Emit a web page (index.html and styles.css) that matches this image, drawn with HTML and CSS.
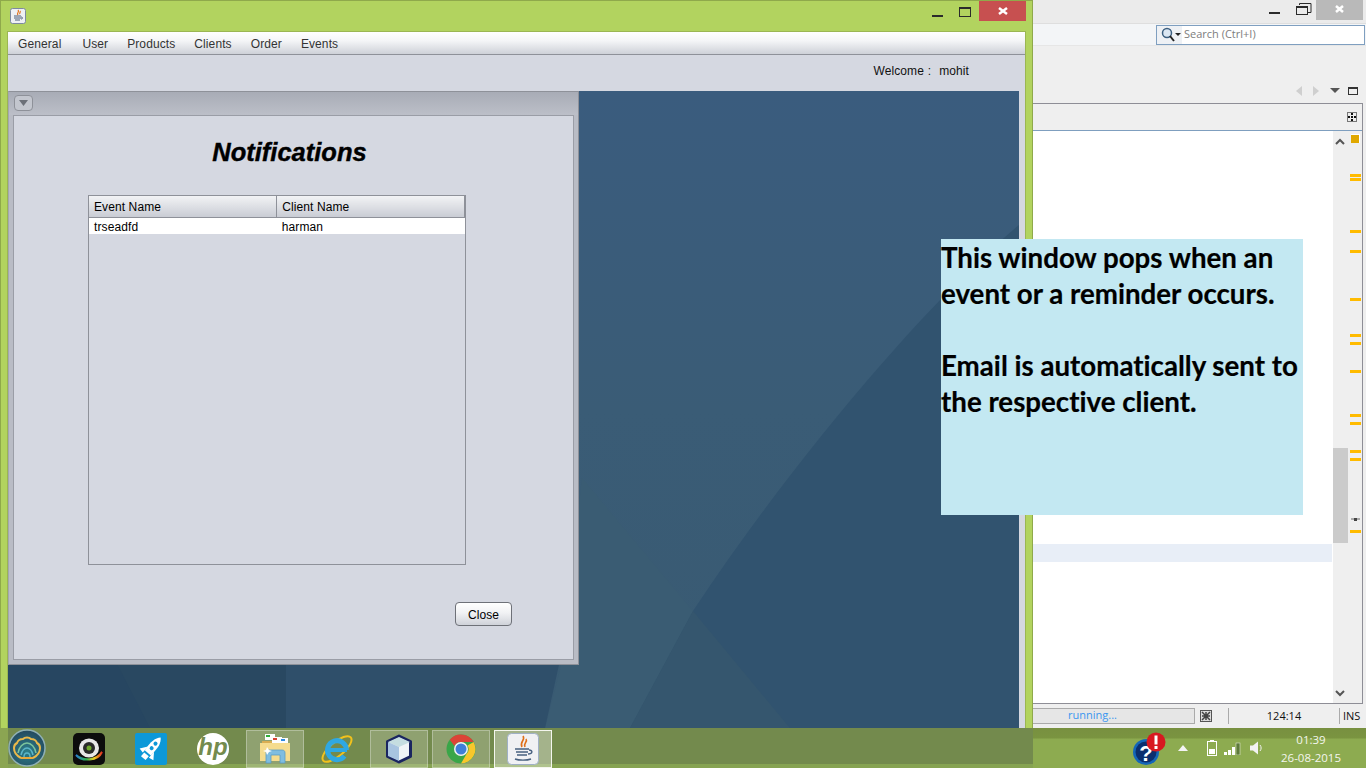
FILE: index.html
```html
<!DOCTYPE html>
<html lang="en">
<head>
    <meta charset="UTF-8">
    <title>Notifications</title>
    <link rel="stylesheet" href="styles.css">
</head>
<body>

<!-- ide window behind the app -->
<div class="ide-window">
    <div class="ide-title">
        <svg class="ide-controls" width="100" height="22" viewBox="0 0 100 22">
            <rect x="6" y="12" width="11" height="2" fill="#2b2b2b"/>
            <path d="M36.500 5V3.500h11.500v9h-3" fill="none" stroke="#2b2b2b"/>
            <rect x="33.500" y="6.500" width="11" height="8" fill="none" stroke="#2b2b2b"/>
            <rect x="33" y="6" width="12" height="2" fill="#2b2b2b"/>
            <rect x="53" y="0" width="47" height="20" fill="#b9b9b9"/>
            <path d="M73 6l7 6M80 6l-7 6" stroke="#fff" stroke-width="2.500"/>
        </svg>
    </div>
    <div class="ide-toolbar">
        <div class="search-box">
            <div class="search-icon">
                <svg width="22" height="18" viewBox="0 0 22 18">
                    <circle cx="7" cy="7" r="4.500" fill="#dbe7f3" stroke="#3c5f80" stroke-width="1.500"/>
                    <path d="M10 10l4 5" stroke="#222" stroke-width="2"/>
                    <path d="M15 7h6l-3 3z" fill="#222"/>
                </svg>
            </div>
            <span class="search-text">Search (Ctrl+I)</span>
        </div>
    </div>
    <div class="ide-nav">
        <svg width="66" height="12" viewBox="0 0 66 12">
            <path d="M7 1v10L1 6z" fill="#cfcfcf"/>
            <path d="M18 1v10l6-5z" fill="#cfcfcf"/>
            <path d="M35 3h10l-5 5z" fill="#555"/>
            <rect x="53.500" y="2.500" width="9" height="7" fill="none" stroke="#333"/>
            <rect x="53" y="2" width="10" height="2" fill="#333"/>
        </svg>
    </div>
    <div class="ide-pane">
        <div class="ide-tabs">
            <svg width="10" height="10" viewBox="0 0 10 10">
                <rect x=".5" y=".5" width="9" height="9" fill="#eee" stroke="#777"/>
                <path d="M5 1v8M1 5h8" stroke="#111" stroke-width="2" stroke-dasharray="2 1"/>
            </svg>
        </div>
        <div class="ide-body">
            <div class="editor">
                <div class="line-highlight"></div>
            </div>
            <svg class="scroll-strip" width="29" height="572" viewBox="0 0 29 572">
                <path d="M3 13l4-4 4 4" fill="none" stroke="#555" stroke-width="2"/>
                <rect x="18" y="3" width="9" height="9" fill="#fff"/>
                <rect x="18" y="4" width="8" height="8" fill="#e0a800"/>
                <rect x="0" y="317" width="15" height="95" fill="#cbcbcb"/>
                <g fill="#ffbb00">
                    <rect x="17" y="43" width="11" height="3"/>
                    <rect x="17" y="47" width="11" height="3"/>
                    <rect x="17" y="99" width="11" height="3"/>
                    <rect x="17" y="119" width="11" height="3"/>
                    <rect x="17" y="167" width="11" height="3"/>
                    <rect x="17" y="203" width="11" height="3"/>
                    <rect x="17" y="211" width="11" height="3"/>
                    <rect x="17" y="239" width="11" height="3"/>
                    <rect x="17" y="283" width="11" height="3"/>
                    <rect x="17" y="291" width="11" height="3"/>
                    <rect x="17" y="319" width="11" height="3"/>
                    <rect x="17" y="327" width="11" height="3"/>
                    <rect x="17" y="399" width="11" height="3"/>
                </g>
                <path d="M18 388h9" stroke="#666"/>
                <rect x="21" y="387" width="3" height="3" fill="#444"/>
                <path d="M3 560l4 4 4-4" fill="none" stroke="#555" stroke-width="2"/>
            </svg>
        </div>
    </div>
    <div class="ide-status">
        <div class="run-box">running...</div>
        <svg class="run-icon" width="12" height="12" viewBox="0 0 12 12">
            <rect x=".5" y=".5" width="11" height="11" fill="#ddd" stroke="#555"/>
            <path d="M2 2l8 8M10 2l-8 8M6 2v8M2 6h8" stroke="#444" stroke-width="1.500"/>
        </svg>
        <span class="status-cell status-pos">124:14</span>
        <span class="status-cell status-ins">INS</span>
    </div>
</div>

<!-- main java app -->
<div class="app-window">
    <div class="app-title">
        <svg class="app-icon" width="16" height="16" viewBox="0 0 16 16">
            <rect x=".5" y=".5" width="15" height="15" rx="2" fill="#eef0f4" stroke="#7d8aa0"/>
            <path d="M8 2c2 2-2 3 0 5M10 3c1 1-1 2 0 3" fill="none" stroke="#e0701a" stroke-width="1.200"/>
            <path d="M4 8h7M4 10h7M5 12h5" stroke="#4a5d78"/>
            <path d="M11 9c2 0 2 2 0 2" fill="none" stroke="#4a5d78"/>
        </svg>
        <div class="app-controls">
            <span class="ctl-min"></span>
            <span class="ctl-max"></span>
            <span class="ctl-close">
                <svg width="10" height="8" viewBox="0 0 10 8">
                    <path d="M1 1l8 6M9 1L1 7" stroke="#fff" stroke-width="2.500"/>
                </svg>
            </span>
        </div>
    </div>
    <div class="app-client">
        <div class="menu-bar">
            <span class="menu-item menu-first">General</span>
            <span class="menu-item">User</span>
            <span class="menu-item">Products</span>
            <span class="menu-item">Clients</span>
            <span class="menu-item">Order</span>
            <span class="menu-item">Events</span>
        </div>
        <div class="welcome-row">Welcome :&nbsp; mohit</div>
        <div class="desktop-pane">
            <svg class="desktop-bg" width="1011" height="637" viewBox="8 91 1011 637">
                <defs>
                    <linearGradient id="deskTop" x1="0" y1="0" x2="0" y2="1">
                        <stop offset="0" stop-color="#3a5c7e"/>
                        <stop offset=".5" stop-color="#3a5c76"/>
                        <stop offset="1" stop-color="#395a72"/>
                    </linearGradient>
                </defs>
                <rect x="8" y="91" width="1011" height="637" fill="url(#deskTop)"/>
                <path d="M1019 225C930 300 800 450 693 611L630 728H1019Z" fill="#31536f"/>
                <path d="M582 478L693 611 630 728H545L560 670Z" fill="#3a5c73"/>
                <path d="M693 611L790 728H630Z" fill="#35566e"/>
                <rect x="8" y="660" width="278" height="68" fill="#274661"/>
                <path d="M286 660H560L545 728H286Z" fill="#2f4f6a"/>
                <path d="M115 660H286V728H150Z" fill="#294861"/>
            </svg>
            <div class="internal-frame">
                <div class="frame-title">
                    <span class="frame-btn">
                        <svg width="9" height="6" viewBox="0 0 9 6"><path d="M0 0h9L4.500 6z" fill="#6c7078"/></svg>
                    </span>
                </div>
                <div class="frame-panel">
                    <h1 class="panel-heading">Notifications</h1>
                    <div class="table-box">
                        <table class="notify-table">
                            <thead>
                                <tr><th>Event Name</th><th>Client Name</th></tr>
                            </thead>
                            <tbody>
                                <tr><td>trseadfd</td><td>harman</td></tr>
                            </tbody>
                        </table>
                    </div>
                    <button class="close-btn">Close</button>
                </div>
            </div>
        </div>
    </div>
</div>

<!-- annotation pasted over the shot -->
<div class="note">
    <p>This window pops when an<br>event or a reminder occurs.</p>
    <p>Email is automatically sent to<br>the respective client.</p>
</div>

<div class="taskbar">
    <div class="task-area">
        <div class="start-btn">
            <svg width="38" height="38" viewBox="0 0 38 38">
                <defs>
                    <radialGradient id="startOrb" cx=".5" cy=".6" r=".6">
                        <stop offset="0" stop-color="#2c7f8a"/>
                        <stop offset="1" stop-color="#24485e"/>
                    </radialGradient>
                </defs>
                <circle cx="19" cy="19" r="18" fill="url(#startOrb)" stroke="#8fb0b4" stroke-width="1.500"/>
                <path d="M13 29C9 27 6 23 6 19 6 17 7 15 9 14 10 11 13 10 15 10 17 8 21 8 23 10 25 10 28 11 29 14 31 15 32 17 32 19 32 23 29 27 25 29" fill="none" stroke="#e9b84a" stroke-width="2"/>
                <path d="M10 24C11 18 15 14 19 14S27 18 28 24" fill="none" stroke="#7cc49c" stroke-width="1.500"/>
                <path d="M13 26C14 22 16 19 19 19S24 22 25 26" fill="none" stroke="#5cb5c8" stroke-width="1.500"/>
                <path d="M16 28C16 26 17 24 19 24S22 26 22 28" fill="none" stroke="#5cb5c8" stroke-width="1.500"/>
                <path d="M13 29H25" stroke="#e9a83a" stroke-width="2"/>
            </svg>
        </div>
        <div class="task-item">
            <svg width="32" height="32" viewBox="0 0 32 32">
                <defs>
                    <linearGradient id="camRing" x1="0" y1="0" x2="1" y2="0">
                        <stop offset="0" stop-color="#2a7fd0"/>
                        <stop offset=".4" stop-color="#30b050"/>
                        <stop offset=".7" stop-color="#f0d020"/>
                        <stop offset="1" stop-color="#e03020"/>
                    </linearGradient>
                </defs>
                <rect width="32" height="32" rx="5" fill="#0c0c0c"/>
                <path d="M3 22c7 6 20 6 26-3-4 9-20 10-26 3z" fill="url(#camRing)" stroke="url(#camRing)" stroke-width="2"/>
                <ellipse cx="16" cy="15" rx="10" ry="9.500" fill="#e8e8e8"/>
                <circle cx="16" cy="15" r="6" fill="#2a2a2a"/>
                <circle cx="16" cy="15" r="2.500" fill="#6ea82c"/>
            </svg>
        </div>
        <div class="task-item">
            <svg width="32" height="32" viewBox="0 0 32 32">
                <rect width="32" height="32" rx="2" fill="#0c98d8"/>
                <g transform="rotate(40 16 16)" fill="#fff">
                    <path d="M16 1c4 4 5 9 4 20h-8c-1-11 0-16 4-20z"/>
                    <path d="M12 16l-5 7 5 1zM20 16l5 7-5 1z"/>
                    <rect x="13" y="23" width="6" height="5"/>
                    <circle cx="16" cy="9" r="2" fill="#0c98d8"/>
                    <circle cx="16" cy="15" r="2" fill="#0c98d8"/>
                </g>
            </svg>
        </div>
        <div class="task-item">
            <svg width="32" height="32" viewBox="0 0 32 32">
                <circle cx="16" cy="16" r="16" fill="#fff"/>
                <text x="16" y="22" class="hp-mark">hp</text>
            </svg>
        </div>
        <div class="task-item task-open">
            <svg width="32" height="32" viewBox="0 0 32 32">
                <path d="M3 8h10l2-3h14v22H3z" fill="#d9ae52"/>
                <rect x="6" y="1" width="10" height="6" fill="#fdfdfd"/>
                <rect x="7" y="2" width="4" height="2" fill="#2fae3a"/>
                <rect x="13" y="4" width="10" height="6" fill="#fdfdfd"/>
                <rect x="14" y="5" width="4" height="2" fill="#d84030"/>
                <rect x="21" y="5" width="8" height="5" fill="#fdfdfd"/>
                <rect x="22" y="6" width="4" height="2" fill="#2f8ae0"/>
                <path d="M1 10h30v18H1z" fill="#f5dc8e"/>
                <path d="M7 30V20c0-2 1-3 3-3h13c2 0 3 1 3 3v10h-5v-8H12v8z" fill="#7fbde0" stroke="#5a9cc4" stroke-width=".8"/>
                <path d="M8 14l2 3 3 1-3 1-2 3-1-3-3-1 3-1z" fill="#fff"/>
            </svg>
        </div>
        <div class="task-item">
            <svg width="32" height="32" viewBox="0 0 32 32">
                <ellipse cx="16" cy="16" rx="18" ry="7" transform="rotate(-40 16 16)" fill="none" stroke="#f2c21c" stroke-width="2"/>
                <path d="M25.500 17A9.500 9.500 0 1 0 23.500 23" fill="none" stroke="#2fa8e2" stroke-width="5"/>
                <rect x="9" y="15" width="17" height="4" fill="#2fa8e2"/>
            </svg>
        </div>
        <div class="task-item task-open">
            <svg width="32" height="32" viewBox="0 0 32 32">
                <path d="M16 3L27.500 8.500v15L16 29 4.500 23.500v-15z" fill="#f0f4f6" stroke="#1a2560" stroke-width="3" stroke-linejoin="round"/>
                <path d="M16 4L27 9 16 14 5 9z" fill="#c5dde0"/>
                <path d="M5 9l11 5v14L5 23z" fill="#a8c4e0"/>
            </svg>
        </div>
        <div class="task-item task-open">
            <svg width="30" height="30" viewBox="0 0 30 30">
                <circle cx="15" cy="15" r="14.500" fill="#3aa648"/>
                <path d="M15 .500A14.500 14.500 0 0 1 27.600 8H15a7 7 0 0 0-6.500 4L3.700 5.800A14.500 14.500 0 0 1 15 .500z" fill="#dc4437"/>
                <path d="M27.600 8A14.500 14.500 0 0 1 15 29.500l5.500-9.500a7 7 0 0 0 1-8.500z" fill="#f8c72c"/>
                <circle cx="15" cy="15" r="7" fill="#f2f2f2"/>
                <circle cx="15" cy="15" r="5.500" fill="#3f7fd8"/>
            </svg>
        </div>
        <div class="task-item task-active">
            <svg width="32" height="32" viewBox="0 0 32 32">
                <rect x=".5" y=".5" width="31" height="31" rx="4" fill="#f0f1f4" stroke="#9fb0c6"/>
                <path d="M16 3c3 4-4 6-1 11M19 6c2 3-3 4-1 8" fill="none" stroke="#e0701a" stroke-width="1.600"/>
                <path d="M8 16h14M9 19h12M10 22h10M8 26c4 1.500 12 1.500 16 0" fill="none" stroke="#47607f" stroke-width="1.400"/>
                <path d="M22 17c4 0 4 4-1 4" fill="none" stroke="#47607f" stroke-width="1.400"/>
            </svg>
        </div>
    </div>
    <div class="tray">
        <svg class="tray-help" width="36" height="36" viewBox="0 0 36 36">
            <circle cx="13" cy="21" r="13" fill="#1466b8"/>
            <circle cx="13" cy="21" r="10.500" fill="#0b2f6e"/>
            <text x="13" y="30" class="help-mark">?</text>
            <circle cx="23" cy="11" r="9.500" fill="#d81820"/>
            <rect x="21.500" y="4.500" width="3" height="9" fill="#fff"/>
            <rect x="21.500" y="15" width="3" height="3" fill="#fff"/>
        </svg>
        <svg class="tray-arrow" width="10" height="6" viewBox="0 0 10 6"><path d="M5 0l5 6H0z" fill="#f4f4f4"/></svg>
        <svg class="tray-battery" width="10" height="16" viewBox="0 0 10 16">
            <rect x="3" y="0" width="4" height="2" fill="#fff"/>
            <rect x=".5" y="1.500" width="9" height="14" fill="none" stroke="#fff"/>
            <rect x="2" y="9" width="6" height="5" fill="#fff"/>
        </svg>
        <svg class="tray-signal" width="17" height="13" viewBox="0 0 17 13">
            <rect x="0" y="10" width="3" height="3" fill="#fff"/>
            <rect x="4" y="8" width="3" height="5" fill="#fff"/>
            <rect x="8" y="5" width="3" height="8" fill="#fff"/>
            <rect x="12" y="1" width="4" height="12" fill="#5d7a3a" stroke="#dfe6cf" stroke-width=".6"/>
        </svg>
        <svg class="tray-speaker" width="14" height="14" viewBox="0 0 14 14">
            <path d="M0 4.500h3L8 .5v13l-5-4H0z" fill="#f2f2f2"/>
            <path d="M10 4c1.500 2 1.500 4 0 6" fill="none" stroke="#f2f2f2"/>
        </svg>
        <div class="tray-clock">
            <span>01:39</span>
            <span>26-08-2015</span>
        </div>
    </div>
</div>

</body>
</html>
```

FILE: styles.css
```css
html, body {
    margin: 0;
    width: 1366px;
    height: 768px;
    overflow: hidden;
}

body {
    position: relative;
    font-family: "Liberation Sans", sans-serif;
    font-size: 12px;
    color: #000;
    background: #8dab50;
}

svg {
    display: block;
}

/* ide window */
.ide-window {
    position: absolute;
    left: 1033px;
    top: 0;
    width: 333px;
    height: 728px;
    display: flex;
    flex-direction: column;
    background: #efefef;
}

.ide-title {
    height: 23px;
    background: #ebebeb;
    border-bottom: 1px solid #dedede;
    display: flex;
    justify-content: flex-end;
    flex-shrink: 0;
}

.ide-controls {
    margin-right: 3px;
}

.ide-toolbar {
    height: 21px;
    background: #f3f5f7;
    border-bottom: 1px solid #e6e6e6;
    display: flex;
    justify-content: flex-end;
    flex-shrink: 0;
}

.search-box {
    width: 207px;
    height: 18px;
    margin: 1px 1px 0 0;
    background: #fff;
    border: 1px solid #7f9fc0;
    display: flex;
    align-items: center;
}

.search-icon {
    width: 25px;
    height: 18px;
    background: #eef1f5;
    display: flex;
    align-items: center;
    padding-left: 3px;
    box-sizing: border-box;
}

.search-text {
    margin-left: 2px;
    padding-bottom: 3px;
    font-family: "Open Sans", sans-serif;
    font-size: 11px;
    color: #7d7d7d;
}

.ide-nav {
    height: 57px;
    flex-shrink: 0;
    display: flex;
    justify-content: flex-end;
    align-items: flex-end;
    padding: 0 5px 6px 0;
    box-sizing: border-box;
}

.ide-pane {
    flex: 1;
    margin-right: 3px;
    border-top: 1px solid #8e8e96;
    border-right: 1px solid #8e8e96;
    border-bottom: 1px solid #8e8e96;
    display: flex;
    flex-direction: column;
    min-height: 0;
}

.ide-tabs {
    height: 26px;
    border-bottom: 1px solid #7f9fbf;
    display: flex;
    justify-content: flex-end;
    align-items: center;
    padding-right: 5px;
    flex-shrink: 0;
}

.ide-body {
    flex: 1;
    display: flex;
    min-height: 0;
}

.editor {
    flex: 1;
    background: #fff;
    padding-top: 413px;
    box-sizing: border-box;
}

.line-highlight {
    height: 18px;
    background: #e8eef7;
    margin-right: 1px;
}

.scroll-strip {
    background: #efefef;
    flex-shrink: 0;
}

.ide-status {
    height: 24px;
    flex-shrink: 0;
    display: flex;
    align-items: center;
    font-family: "Open Sans", sans-serif;
    font-size: 11px;
}

.run-box {
    width: 162px;
    height: 16px;
    box-sizing: border-box;
    background: #e6e6e6;
    border: 1px solid #aaa;
    border-left: 0;
    color: #3a96f0;
    text-align: center;
    line-height: 12px;
    padding-right: 42px;
}

.run-icon {
    margin-left: 5px;
}

.status-cell {
    height: 16px;
    line-height: 16px;
    border-left: 1px solid #aaa;
}

.status-pos {
    width: 110px;
    margin-left: 16px;
    text-align: center;
    color: #111;
}

.status-ins {
    padding-left: 3px;
    color: #111;
}

/* main app window */
.app-window {
    position: absolute;
    left: 0;
    top: 0;
    width: 1033px;
    height: 728px;
    box-sizing: border-box;
    background: #b2d35f;
    border: 1px solid #8fa94b;
    border-bottom: 0;
    display: flex;
    flex-direction: column;
}

.app-title {
    height: 31px;
    flex-shrink: 0;
    padding: 7px 0 0 9px;
    box-sizing: border-box;
    display: flex;
    justify-content: space-between;
}

.app-controls {
    display: flex;
    margin-top: -7px;
    margin-right: 6px;
}

.ctl-min {
    width: 11px;
    height: 2px;
    background: #2b2b2b;
    margin: 14px 16px 0 0;
}

.ctl-max {
    width: 12px;
    height: 10px;
    box-sizing: border-box;
    border: 1px solid #2b2b2b;
    border-top-width: 2px;
    margin: 6px 8px 0 0;
}

.ctl-close {
    width: 47px;
    height: 20px;
    background: #c75050;
    display: flex;
    align-items: center;
    justify-content: center;
}

.app-client {
    flex: 1;
    margin: 0 7px;
    background: #d5d8e1;
    display: flex;
    flex-direction: column;
    min-height: 0;
    box-shadow: 0 0 0 1px #9bb653;
    letter-spacing: 0.1px;
}

.menu-bar {
    height: 22px;
    flex-shrink: 0;
    box-sizing: content-box;
    background: linear-gradient(#ffffff, #f4f5f7 40%, #ced1d8);
    border-bottom: 1px solid #8e9199;
    display: flex;
    align-items: center;
    gap: 19px;
    padding-left: 10px;
    color: #333;
}

.menu-item {
    padding-top: 2px;
}

.menu-first {
    margin-right: 2px;
}

.welcome-row {
    height: 36px;
    flex-shrink: 0;
    padding-right: 56px;
    box-sizing: border-box;
    text-align: right;
    line-height: 32px;
    color: #111;
    word-spacing: 0.5px;
}

.desktop-pane {
    flex: 1;
    margin-right: 6px;
    position: relative;
    overflow: hidden;
    min-height: 0;
}

.desktop-bg {
    position: absolute;
    left: 0;
    top: 0;
}

.internal-frame {
    position: absolute;
    left: 0;
    top: 0;
    width: 571px;
    height: 574px;
    box-sizing: border-box;
    background: #b9bcc5;
    border: 1px solid #8e9199;
    border-left: 1px solid #a3a6af;
    display: flex;
    flex-direction: column;
    padding: 0 4px 4px;
}

.frame-title {
    height: 23px;
    margin: 0 -4px;
    padding: 3px 0 0 5px;
    box-sizing: border-box;
    background: linear-gradient(#a8acb6, #bcbfc8);
    flex-shrink: 0;
}

.frame-btn {
    width: 19px;
    height: 16px;
    box-sizing: border-box;
    border: 1px solid #8e9199;
    border-radius: 4px;
    background: #c3c6ce;
    display: flex;
    align-items: center;
    justify-content: center;
}

.frame-panel {
    flex: 1;
    background: #d5d8e1;
    border: 1px solid #9a9da6;
    display: flex;
    flex-direction: column;
    min-height: 0;
}

.panel-heading {
    margin: 21px 8px 0 0;
    height: 30px;
    line-height: 30px;
    text-align: center;
    font-family: "Liberation Sans", sans-serif;
    font-size: 25.500px;
    font-weight: bold;
    font-style: italic;
    letter-spacing: 0;
    -webkit-text-stroke: 0.4px #000;
}

.table-box {
    width: 378px;
    height: 370px;
    box-sizing: border-box;
    margin: 28px 0 0 74px;
    border: 1px solid #8e9199;
    flex-shrink: 0;
}

.notify-table {
    width: 100%;
    border-collapse: collapse;
    table-layout: fixed;
}

.notify-table th {
    height: 21px;
    padding: 2px 0 0 5px;
    box-sizing: border-box;
    text-align: left;
    font-weight: normal;
    background: linear-gradient(#f2f3f5, #c9ccd4);
    border-right: 1px solid #8e9199;
    border-bottom: 1px solid #8e9199;
}

.notify-table td {
    height: 17px;
    padding: 2px 0 0 5px;
    box-sizing: border-box;
    background: #fff;
}

.close-btn {
    align-self: flex-end;
    width: 57px;
    height: 24px;
    margin: 37px 61px 0 0;
    padding: 1px 0 0;
    font-family: "Liberation Sans", sans-serif;
    font-size: 12px;
    letter-spacing: 0.1px;
    color: #000;
    background: linear-gradient(#ffffff, #f1f2f4 45%, #cfd2d9);
    border: 1px solid #6e7178;
    border-radius: 4px;
}

/* pasted note */
.note {
    position: absolute;
    left: 941px;
    top: 239px;
    width: 362px;
    height: 276px;
    box-sizing: border-box;
    padding-top: 1px;
    background: #c3e8f2;
    font-family: Lato, sans-serif;
    font-size: 27.700px;
    font-weight: bold;
    font-variant-ligatures: none;
    line-height: 36px;
    -webkit-text-stroke: 0.2px #000;
}

.note p {
    margin: 0 0 36px;
}

/* taskbar */
.taskbar {
    position: absolute;
    left: 0;
    bottom: 0;
    width: 1366px;
    height: 40px;
    display: flex;
    background: linear-gradient(#789040 0, #7a9440 10px, #8dab50 11px);
}

.task-area {
    width: 1033px;
    flex-shrink: 0;
    height: 40px;
    box-sizing: border-box;
    display: flex;
    gap: 4px;
    padding-top: 2px;
    background: linear-gradient(#738a4d 36px, #86a352 36px);
    border-left: 8px solid #8ba552;
}

.start-btn {
    width: 48px;
    margin-top: -1px;
}

.task-item {
    width: 58px;
    height: 38px;
    box-sizing: border-box;
    display: flex;
    align-items: center;
    justify-content: center;
}

.task-open {
    background: rgba(255, 255, 255, 0.2);
    border: 1px solid rgba(255, 255, 255, 0.3);
}

.task-active {
    background: rgba(255, 255, 255, 0.35);
    border: 1px solid #f4f6ee;
}

.hp-mark {
    font-family: "Liberation Sans", sans-serif;
    font-size: 24px;
    font-weight: bold;
    font-style: italic;
    text-anchor: middle;
    fill: #748b4d;
}

.help-mark {
    font-family: "Liberation Sans", sans-serif;
    font-size: 22px;
    font-weight: bold;
    text-anchor: middle;
    fill: #fff;
}

.tray {
    flex: 1;
    display: flex;
    align-items: center;
    padding-left: 100px;
    position: relative;
}

.tray-help {
    flex-shrink: 0;
    margin-top: 2px;
}

.tray-arrow {
    margin: 0 0 0 9px;
}

.tray-battery {
    margin: 0 0 0 19px;
}

.tray-signal {
    margin: 0 0 0 7px;
}

.tray-speaker {
    margin: 0 0 0 9px;
}

.tray-clock {
    margin-left: 14px;
    width: 66px;
    padding-top: 2px;
    display: flex;
    flex-direction: column;
    align-items: center;
    gap: 2px;
    font-family: "Open Sans", sans-serif;
    font-size: 11.500px;
    line-height: 16px;
    color: #f4f6ee;
}
```
